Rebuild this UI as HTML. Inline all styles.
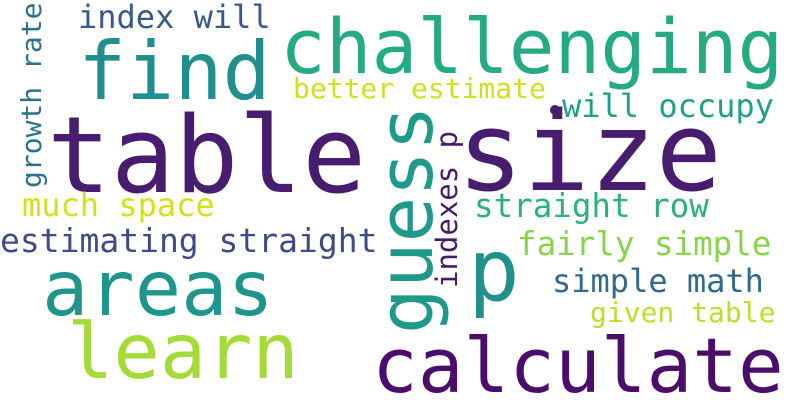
<!DOCTYPE html>
<html><head><meta charset="utf-8"><style>
html,body{margin:0;padding:0;background:#fff;}
svg{display:block;}
text{font-family:"DejaVu Sans Mono","Liberation Mono",monospace;}
</style></head><body>
<svg width="800" height="400" xmlns="http://www.w3.org/2000/svg">
<rect width="800" height="400" fill="#fff"/>
<text x="47" y="192" font-size="106" fill="#481c6e">table</text>
<text x="457" y="190" font-size="110" fill="#481c6e">size</text>
<text x="78" y="99" font-size="80" fill="#218f8d">find</text>
<text x="78" y="28" font-size="32" fill="#38598c">index will</text>
<text transform="translate(41,188) rotate(-90)" font-size="28" fill="#2c728e">growth rate</text>
<text x="280" y="73" font-size="76" fill="#25ab82">challenging</text>
<text x="293" y="98" font-size="28" fill="#d0e11c">better estimate</text>
<text x="562" y="117" font-size="32" fill="#1fa088">will occupy</text>
<circle cx="555" cy="110" r="5" fill="#481c6e"/>
<text transform="translate(457,288) rotate(-90)" font-size="29" fill="#48186a">indexes p</text>
<text transform="translate(432,334) rotate(-90)" font-size="76" fill="#1f9a8a">guess</text>
<text x="468" y="300" font-size="86" fill="#21918c">p</text>
<text x="474" y="217" font-size="32.5" fill="#2bb07f">straight row</text>
<text x="517" y="255" font-size="32.5" fill="#86d549">fairly simple</text>
<text x="552" y="292" font-size="32" fill="#31688e">simple math</text>
<text x="590" y="322" font-size="28" fill="#bddf26">given table</text>
<text x="372" y="392" font-size="76" fill="#4b0c6b">calculate</text>
<text x="22" y="216" font-size="32" fill="#d2e21b">much space</text>
<text x="0" y="252" font-size="33" fill="#3e4a89">estimating straight</text>
<text x="42" y="315" font-size="77" fill="#1f968b">areas</text>
<text x="67" y="378" font-size="77" fill="#a5db36">learn</text>
</svg>
</body></html>
